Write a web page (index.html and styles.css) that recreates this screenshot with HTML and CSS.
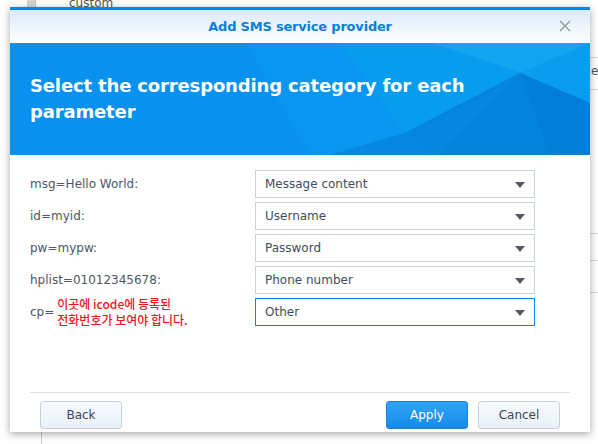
FILE: index.html
```html
<!DOCTYPE html>
<html>
<head>
<meta charset="utf-8">
<link rel="stylesheet" href="styles.css">
</head>
<body>
<div class="desk">
  <div class="bg-thumb"></div>
  <div class="bg-text">custom</div>
  <div class="bg-right">
    <div class="bg-line l1"></div>
    <div class="bg-e">e</div>
    <div class="bg-line l2"></div>
    <div class="bg-line l3"></div>
    <div class="bg-line l4"></div>
    <div class="bg-line l5"></div>
  </div>
  <div class="bg-vline"></div>

  <div class="window">
    <div class="win-head">
      <span class="win-title">Add SMS service provider</span>
      <svg class="win-close" width="12" height="12" viewBox="0 0 12 12"><path d="M1 1L11 11M11 1L1 11" stroke="#9aa2aa" stroke-width="1.6"/></svg>
    </div>
    <div class="banner">
      <svg class="banner-art" width="580" height="112" viewBox="0 0 580 112" preserveAspectRatio="none">
        <rect width="580" height="112" fill="#0891ef"/>
        <polygon points="235,0 420,0 400,112 300,112" fill="#0996f0"/>
        <polygon points="420,0 580,0 580,20 510,30" fill="#11a4f0"/>
        <polygon points="330,0 420,0 510,30 395,90" fill="#079cee"/>
        <polygon points="395,90 510,30 580,60 580,112 430,112" fill="#0483dc"/>
        <polygon points="510,30 580,0 580,60" fill="#0a9ded"/>
        <polygon points="320,112 395,90 430,112" fill="#0687e2"/>
        <polygon points="510,30 540,112 580,112 580,60" fill="#037ed8"/>
        <polygon points="395,90 470,55 510,30 430,112" fill="#0588e0" opacity="0.7"/>
      </svg>
      <h1 class="banner-title">Select the corresponding category for each parameter</h1>
    </div>
    <div class="form">
      <div class="row">
        <div class="label">msg=Hello World:</div>
        <div class="select"><span>Message content</span><i class="caret"></i></div>
      </div>
      <div class="row">
        <div class="label">id=myid:</div>
        <div class="select"><span>Username</span><i class="caret"></i></div>
      </div>
      <div class="row">
        <div class="label">pw=mypw:</div>
        <div class="select"><span>Password</span><i class="caret"></i></div>
      </div>
      <div class="row">
        <div class="label">hplist=01012345678:</div>
        <div class="select"><span>Phone number</span><i class="caret"></i></div>
      </div>
      <div class="row">
        <div class="label cp"><span>cp=</span><span class="note">이곳에 icode에 등록된<br>전화번호가 보여야 합니다.</span></div>
        <div class="select focus"><span>Other</span><i class="caret"></i></div>
      </div>
    </div>
    <div class="footer">
      <button class="btn">Back</button>
      <div class="spacer"></div>
      <button class="btn primary">Apply</button>
      <button class="btn">Cancel</button>
    </div>
  </div>
</div>
</body>
</html>
```

FILE: styles.css
```css
* { box-sizing: border-box; }
html, body { margin: 0; padding: 0; }
body {
  width: 598px;
  height: 444px;
  overflow: hidden;
  background: #ffffff;
  font-family: "DejaVu Sans", Verdana, sans-serif;
}
.desk { position: relative; width: 598px; height: 444px; }

.bg-thumb {
  position: absolute; left: 27px; top: 0; width: 9px; height: 10px;
  background: #d4d4d4; border-right: 1px solid #c4c4c4;
}
.bg-text {
  position: absolute; left: 69px; top: -4px;
  font-size: 12px; line-height: 14px; color: #555;
}
.bg-right { position: absolute; left: 590px; top: 0; width: 8px; height: 444px; }
.bg-line { position: absolute; left: 0; width: 8px; height: 1px; background: #d8d8d8; }
.bg-line.l1 { top: 57px; }
.bg-line.l2 { top: 89px; }
.bg-line.l3 { top: 233px; }
.bg-line.l4 { top: 260px; }
.bg-line.l5 { top: 292px; }
.bg-e { position: absolute; left: 1px; top: 64px; font-size: 12px; color: #555; }
.bg-vline { position: absolute; left: 41px; top: 425px; width: 1px; height: 19px; background: #d0d0d0; }

.window {
  position: absolute; left: 10px; top: 7px;
  width: 580px; height: 425px;
  background: #fff;
  border-top: 3px solid #0a86e6;
  box-shadow: 0 2px 8px rgba(0,0,0,0.35);
  display: flex; flex-direction: column;
}
.win-head {
  position: relative;
  height: 33px;
  background: linear-gradient(#dbeaf9, #ffffff);
  display: flex; align-items: center; justify-content: center;
}
.win-title {
  font-weight: bold; font-size: 13px; color: #0b7fd9;
  letter-spacing: -0.2px;
}
.win-close { position: absolute; right: 19px; top: 10px; }

.banner {
  position: relative; height: 112px;
  display: flex; align-items: center;
  padding: 0 20px;
  overflow: hidden;
}
.banner-art { position: absolute; left: 0; top: 0; }
.banner-title {
  position: relative;
  margin: 0; width: 470px;
  color: #fff; font-size: 18px; font-weight: bold; line-height: 26px;
  letter-spacing: -0.15px;
}

.form {
  padding: 15px 55px 0 20px;
  display: flex; flex-direction: column; gap: 4px;
  flex: 1;
}
.row { display: flex; align-items: center; height: 28px; }
.label {
  width: 225px; font-size: 12px; color: #4d5864;
}
.label.cp { display: flex; align-items: center; gap: 3px; }
.note {
  font-family: "Noto Sans CJK KR", sans-serif;
  font-size: 12px; line-height: 16px; color: #f0141e; font-weight: 500;
  margin-top: -1px;
}
.select {
  width: 280px; height: 28px;
  border: 1px solid #c9d3de;
  display: flex; align-items: center; justify-content: space-between;
  padding: 0 9px 0 9px;
  font-size: 12px; color: #404e5c;
}
.select.focus { border-color: #0a86e6; }
.caret {
  width: 0; height: 0;
  border-left: 5px solid transparent; border-right: 5px solid transparent;
  border-top: 6px solid #525c67;
  margin-top: 1px;
}

.footer {
  margin: 0 20px;
  border-top: 1px solid #dedede;
  height: 40px;
  display: flex; align-items: flex-start;
  padding: 8px 10px 0 10px;
  gap: 10px;
}
.spacer { flex: 1; }
.btn {
  width: 82px; height: 28px;
  border: 1px solid #c6d1dc; border-radius: 3px;
  background: linear-gradient(#f8fbfe, #e9f0f7);
  font-family: "DejaVu Sans", Verdana, sans-serif;
  font-size: 12px; color: #3a4654;
  padding: 0;
}
.btn.primary {
  background: linear-gradient(#30a3f7, #178ae8);
  border-color: #1b80d8;
  color: #fff;
}
```
